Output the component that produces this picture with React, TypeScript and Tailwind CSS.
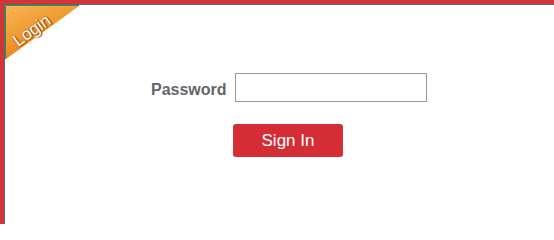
const LoginRibbon = () => {
  return (
    <div className="absolute left-0 top-0 w-[74px] h-[55px]">
      <svg width="74" height="55" viewBox="0 0 74 55" className="absolute left-0 top-0">
        <defs>
          <linearGradient id="ribbon" x1="0" y1="0" x2="0.6" y2="1">
            <stop offset="0" stopColor="#f8b458" />
            <stop offset="0.5" stopColor="#ef9a2e" />
            <stop offset="1" stopColor="#dd7410" />
          </linearGradient>
        </defs>
        <polygon points="1,1 74,1 1,54" fill="url(#ribbon)" />
        <polyline points="0.5,54 0.5,0.5 74,0.5" fill="none" stroke="#3e8d3a" strokeWidth="1" />
      </svg>
      <div
        className="absolute left-[6px] top-[17px] text-white text-[17px] leading-none -rotate-[35deg] origin-center"
        style={{ fontFamily: '"Liberation Sans", Arial, sans-serif', textShadow: "0 0 2px #9a4a00, 1px 1px 1px #8a3f00" }}
      >
        Login
      </div>
    </div>
  );
};

const App = () => {
  return (
    <div
      className="w-[554px] h-[224px] bg-[#d5333a] pt-[4px] pl-[4px] overflow-hidden"
      style={{ fontFamily: '"Liberation Sans", Arial, sans-serif' }}
    >
      <div className="relative h-[260px] bg-white border-t border-l border-[#46707a]">
        <LoginRibbon />
        <div className="flex flex-col pt-[68px] pl-[146px]">
          <div className="flex items-center gap-[8px]">
            <label className="mt-[4px] font-bold text-[16px] text-[#63666a]">Password</label>
            <input
              type="password"
              className="w-[192px] h-[29px] border border-[#999999] bg-white outline-none px-1"
            />
          </div>
          <button className="mt-[22px] ml-[82px] w-[110px] h-[33px] rounded-[3px] bg-[#d52d36] text-white text-[17px]">
            Sign In
          </button>
        </div>
      </div>
    </div>
  );
};

export default App;
